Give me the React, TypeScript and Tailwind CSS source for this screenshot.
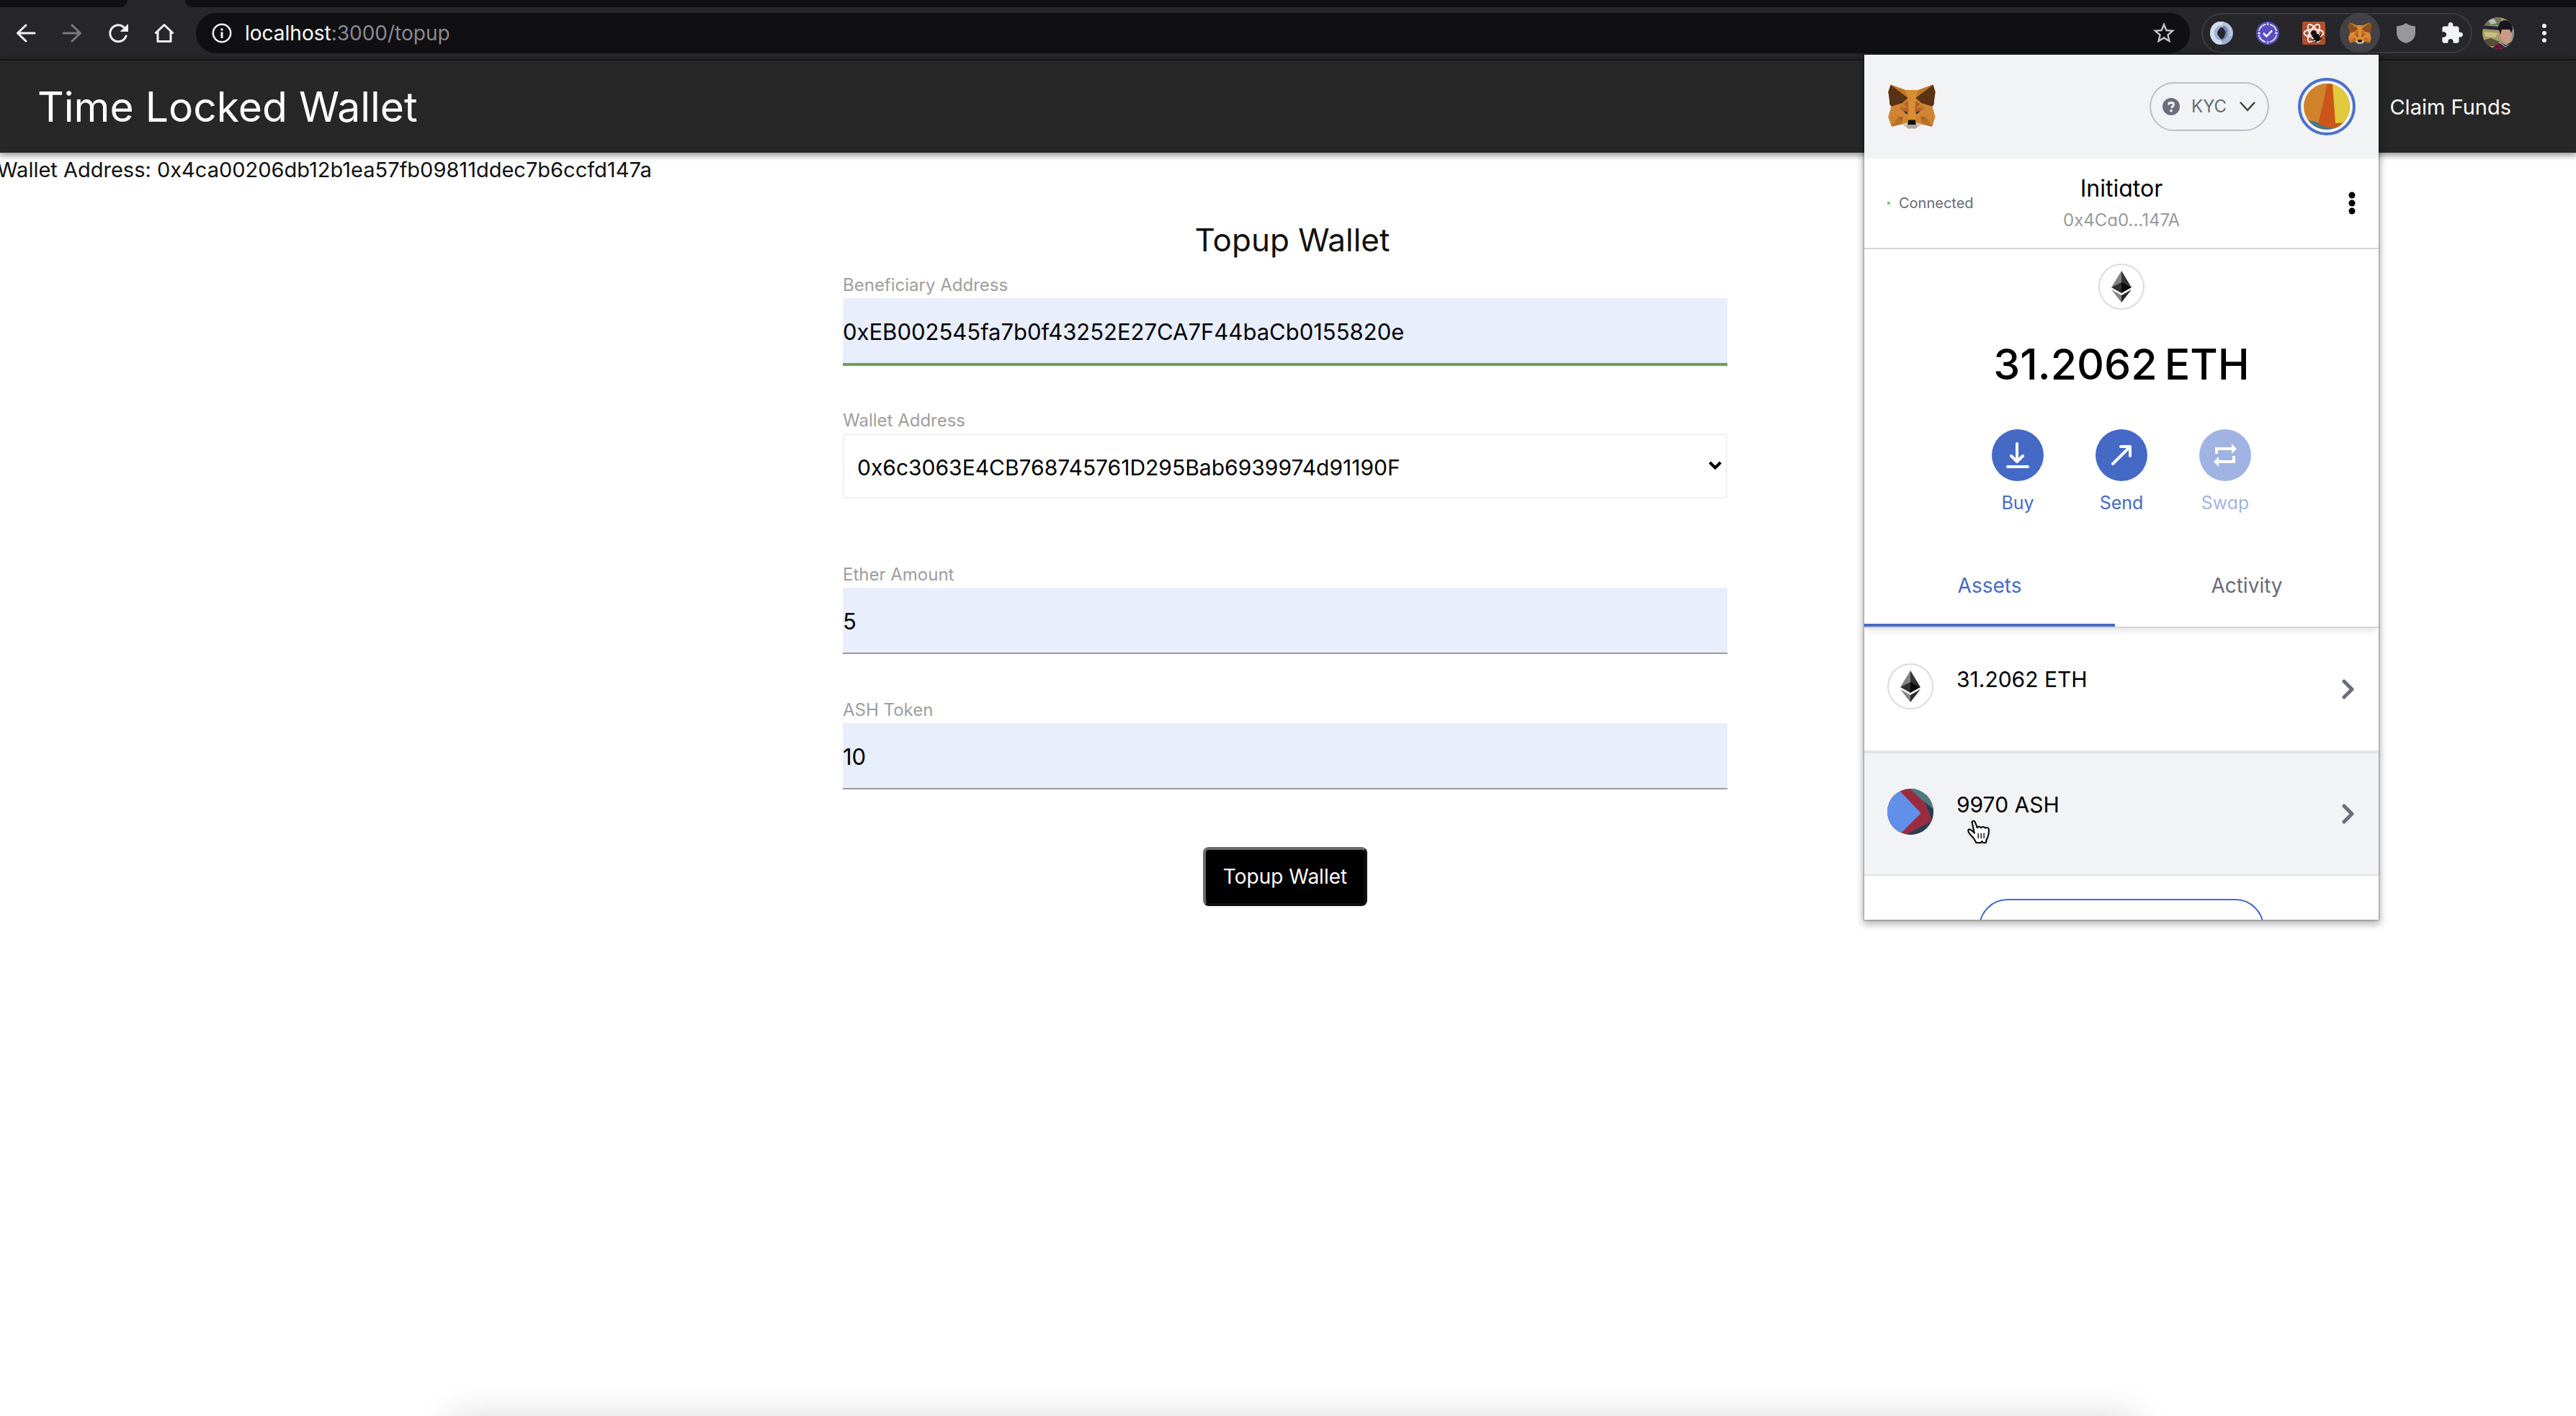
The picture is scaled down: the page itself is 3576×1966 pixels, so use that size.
import type { ReactNode } from 'react'

function IconButton({ label, className = '', children }: { label: string; className?: string; children: ReactNode }) {
  return (
    <button type="button" aria-label={label} className={`flex shrink-0 items-center justify-center ${className}`}>
      {children}
    </button>
  )
}

function Fox({ className, ear, body }: { className: string; ear: string; body: string }) {
  return (
    <svg viewBox="65 81 199 186" className={className} aria-hidden="true">
      <path
        fill={body}
        d="M76 82 138 105H191L253 82 263 112 257 150 259 158 254 163 256 168 250 173 262 214 249 258 205 247 182 265H147L124 247 80 258 66 214 79 173 73 168 75 163 70 158 72 150 66 112Z"
      />
      <path fill="#b9702a" d="M76 82 138 105 148 138ZM253 82 191 105 181 138Z" opacity=".7" />
      <path fill="#d98e33" d="M138 105H191L181 138 177 184 180 230H149L152 184 148 138Z" />
      <path fill={ear} d="M76 83 148 138 125 159 79 173 72 165 71 150 66 112ZM253 83 181 138 204 159 250 173 257 165 258 150 263 112Z" />
      <path fill="#b9702b" d="M66 216H107L124 247 80 258ZM262 216H222L205 247 249 258Z" />
      <path fill="#cd8230" d="M66 216 107 216 80 256ZM262 216 222 216 249 256Z" />
      <path fill="#a95f26" d="M107 216H127L122 240ZM222 216H202L207 240Z" />
      <path fill="#b0632a" d="M111 181 148 148 151 190 146 208 128 193ZM218 181 181 148 178 190 183 208 201 193Z" />
      <path fill="#c77a30" d="M111 181 130 163 148 181ZM218 181 199 163 181 181Z" />
      <path fill="#2b3438" d="M131 193 147 197 146 205 137 201ZM198 193 182 197 183 205 192 201Z" />
      <path fill="#d2c7bb" d="M124 246 148 240H181L205 246 182 265H147Z" />
      <path fill="#b3a697" d="M140 252H189L182 265H147Z" />
      <path fill="#111" d="M150 230H179L182 250H147Z" />
    </svg>
  )
}

function EthLogo() {
  return (
    <span className="flex size-16 shrink-0 items-center justify-center rounded-full border-2 border-[#dcdcdc] bg-white">
      <svg viewBox="0 0 28 44" className="h-11 w-7" aria-hidden="true">
        <path fill="#828384" d="M14 0 0 23 14 17Z" />
        <path fill="#343434" d="M14 0 28 23 14 17Z" />
        <path fill="#2f3030" d="M0 23 14 16V31Z" />
        <path fill="#0b0b0b" d="M28 23 14 16V31Z" />
        <path fill="#828384" d="M0 26 14 34V44Z" />
        <path fill="#2a2a2a" d="M28 26 14 34V44Z" />
      </svg>
    </span>
  )
}

function TokenLogo() {
  return (
    <svg viewBox="60 48 192 192" className="size-16 shrink-0" aria-hidden="true">
      <clipPath id="token">
        <circle cx="156" cy="144" r="96" />
      </clipPath>
      <g clipPath="url(#token)">
        <path fill="#9a2c42" d="M60 48H252V240H60Z" />
        <path fill="#4b7c80" d="M146 40 252 140V40Z" />
        <path fill="#23404f" d="M215 103 252 134V200L242 175Z" />
        <path fill="#23404f" d="M140 240 252 165V250H140Z" />
        <path fill="#9a2c42" d="M190 90 215 103 244 172 240 186 135 240 190 150Z" />
        <path fill="#6090e8" d="M103 48 200 150 106 244H40V48Z" />
      </g>
    </svg>
  )
}

function AccountAvatar() {
  return (
    <svg viewBox="0 0 64 64" className="size-16" aria-hidden="true">
      <clipPath id="account">
        <circle cx="32" cy="32" r="32" />
      </clipPath>
      <g clipPath="url(#account)">
        <path fill="#d0822a" d="M0 0H64V64H0Z" />
        <path fill="#45788a" d="M0 49 20 54 64 64V70H0Z" />
        <path fill="#cb5619" d="M33 0H41L44 55 64 52V64H46L20 57Z" />
        <path fill="#e0ca3c" d="M40 0H64V54L44 55Z" />
      </g>
    </svg>
  )
}

function ProfilePhoto() {
  return (
    <svg viewBox="0 0 44 44" className="size-11" aria-hidden="true">
      <clipPath id="profile">
        <circle cx="22" cy="22" r="22" />
      </clipPath>
      <g clipPath="url(#profile)">
        <path fill="#a59a6c" d="M0 0H44V44H0Z" />
        <path fill="#6f7a5c" d="M0 0H26V11H0Z" />
        <path fill="#b9c0ae" d="M8 4 16 2 20 8 12 10ZM34 0H44V8Z" />
        <path fill="#23262d" d="M0 11 24 13V18L0 16Z" />
        <path fill="#cbbf82" d="M2 20 22 22 18 28 4 27Z" />
        <path fill="#574d38" d="M0 32 12 29 24 34 18 40H4Z" />
        <path fill="#8f8e8a" d="M40 10H44V30H40Z" />
        <path fill="#c99a86" d="M25 16H41V26Q40 36 34 36 27 34 25 26Z" />
        <path fill="#17161c" d="M22 14Q23 4 32 4 42 5 42 16L40 22 38 17 27 17 25 24Z" />
        <path fill="#6a123c" d="M12 44 22 36 36 40 42 34 44 44Z" />
        <path fill="#2a2a40" d="M23 34 33 39 40 34 37 42H28Z" />
        <path stroke="#d5d5dd" strokeWidth="1" fill="none" d="M24 35 32 41 38 38" />
      </g>
    </svg>
  )
}

function BrowserToolbar() {
  return (
    <div className="bg-[#27262b]">
      <div className="flex h-[10px] overflow-hidden">
        <div className="w-[177px] rounded-br-xl bg-[#101012]" />
        <div className="w-20" />
        <div className="flex-1 rounded-bl-xl bg-[#101012]" />
      </div>
      <div className="flex h-[74px] items-center border-b-2 border-[#1a1a1c] pr-3 pl-1 text-[#f1f3f4]">
        <IconButton label="Back" className="h-14 w-16">
          <svg viewBox="0 0 28 28" className="size-7" fill="none" stroke="currentColor" strokeWidth="3" strokeLinecap="round" strokeLinejoin="round">
            <path d="M26 14H2.500M14 3 2.500 14 14 25" />
          </svg>
        </IconButton>
        <IconButton label="Forward" className="h-14 w-16 text-[#7c7b7f]">
          <svg viewBox="0 0 28 28" className="size-7" fill="none" stroke="currentColor" strokeWidth="3" strokeLinecap="round" strokeLinejoin="round">
            <path d="M2 14H25.500M14 3 25.500 14 14 25" />
          </svg>
        </IconButton>
        <IconButton label="Reload" className="h-14 w-16">
          <svg viewBox="0 0 28 28" className="size-7" fill="none" stroke="currentColor" strokeWidth="3" strokeLinecap="round">
            <path d="M21.500 5.500A11.400 11.400 0 1 0 25 18" />
            <path fill="currentColor" stroke="none" d="M28 1V12H16.500Z" />
          </svg>
        </IconButton>
        <IconButton label="Home" className="h-14 w-16">
          <svg viewBox="0 0 28 28" className="size-7" fill="none" stroke="currentColor" strokeWidth="3">
            <path d="M1.500 14.500 14 2.500 26.500 14.500M5 12V25.500H23V12" strokeLinejoin="round" />
          </svg>
        </IconButton>
        <div className="ml-3 flex h-14 flex-1 items-center rounded-full bg-[#101013] pr-2 pl-[22px]">
          <svg viewBox="0 0 28 28" className="mr-[18px] size-7" fill="none" stroke="currentColor" strokeWidth="2.500" aria-hidden="true">
            <circle cx="14" cy="14" r="12.200" />
            <path strokeWidth="3" d="M14 12.500V21M14 7.500V10.500" />
          </svg>
          <p className="text-[28px] leading-9 text-[#8b8a8e]">
            <span className="text-white">localhost</span>:3000/topup
          </p>
          <IconButton label="Bookmark this page" className="ml-auto size-14 text-[#c4c4c6]">
            <svg viewBox="0 0 24 24" className="size-9" fill="currentColor">
              <path d="M22 9.240l-7.190-.62L12 2 9.190 8.630 2 9.240l5.460 4.730L5.820 21 12 17.270 18.180 21l-1.630-7.030L22 9.240zM12 15.400l-3.760 2.270 1-4.280-3.320-2.880 4.380-.38L12 6.100l1.710 4.040 4.380.38-3.320 2.880 1 4.280L12 15.400z" />
            </svg>
          </IconButton>
        </div>
        <div className="ml-4 flex items-center gap-2 rounded-full ring-2 ring-[#3b3b40] ring-inset">
          <IconButton label="JSON viewer" className="size-14">
            <svg viewBox="0 0 32 32" className="size-8" fill="none">
              <circle cx="16" cy="16" r="11" stroke="#9fb0d2" strokeWidth="10" />
              <path stroke="#d3dcee" strokeWidth="6" d="M16 28C9 31 2 23 3 14 4 6 11 1 18 3" />
              <path stroke="#6f83ab" strokeWidth="3" d="M18 7C25 9 25 22 15 25" />
              <path stroke="#b9c6e0" strokeWidth="4" d="M17 3C27 3 31 13 28 20" />
              <ellipse cx="16" cy="16" rx="4.500" ry="8" fill="#27262b" />
            </svg>
          </IconButton>
          <IconButton label="Task verifier" className="size-14">
            <svg viewBox="0 0 32 32" className="size-8" fill="none" stroke="#fff">
              <circle cx="16" cy="16" r="16" fill="#5a4fc0" stroke="none" />
              <circle cx="16" cy="16" r="12.500" strokeWidth="1.500" strokeDasharray="13.600 6" strokeDashoffset="-3" />
              <path strokeWidth="2.500" d="M10 16 14.500 20.500 22 12.500" />
              <path strokeWidth="1.500" d="M16 1.500V5M16 27V30.500" />
              <circle cx="4" cy="16" r="1.600" fill="#fff" stroke="none" />
              <circle cx="28" cy="16" r="1.600" fill="#fff" stroke="none" />
            </svg>
          </IconButton>
          <IconButton label="React developer tools" className="size-14">
            <svg viewBox="0 0 32 32" className="size-8" fill="none" stroke="#fff" strokeWidth="1.700">
              <rect width="32" height="32" rx="2" fill="#b1502f" stroke="none" />
              <ellipse cx="16" cy="16" rx="13.500" ry="5.500" />
              <ellipse cx="16" cy="16" rx="13.500" ry="5.500" transform="rotate(60 16 16)" />
              <ellipse cx="16" cy="16" rx="13.500" ry="5.500" transform="rotate(120 16 16)" />
              <circle cx="16" cy="16" r="3.500" fill="#111" stroke="none" />
              <ellipse cx="20" cy="22" rx="4.500" ry="6" fill="#111" stroke="none" transform="rotate(-35 20 22)" />
              <path stroke="#111" d="M13 20 18 22M13 26 19 24M18 29 21 25M22 17 22 20M26 18 22 22M27 24 22 24" />
            </svg>
          </IconButton>
          <IconButton label="MetaMask" className="size-14 rounded-full bg-[#434347]">
            <Fox className="h-[30px] w-8" ear="#8a4f22" body="#e08a2c" />
          </IconButton>
          <IconButton label="Shield" className="size-14">
            <svg viewBox="0 0 26 28" className="h-7 w-[26px]">
              <path fill="#98989a" d="M13 0C17 3 21 4 26 4.500V13C26 21 21 26 13 28 5 26 0 21 0 13V4.500C5 4 9 3 13 0Z" />
            </svg>
          </IconButton>
          <IconButton label="Extensions" className="size-14">
            <svg viewBox="1 1 22 22" className="size-[30px]" fill="currentColor">
              <path d="M20.500 11H19V7c0-1.100-.9-2-2-2h-4V3.500C13 2.120 11.880 1 10.500 1S8 2.120 8 3.500V5H4c-1.100 0-1.990.9-1.990 2v3.800H3.500c1.490 0 2.700 1.210 2.700 2.700s-1.210 2.700-2.700 2.700H2V20c0 1.100.9 2 2 2h3.800v-1.500c0-1.490 1.210-2.700 2.700-2.700 1.490 0 2.700 1.210 2.700 2.700V22H17c1.100 0 2-.9 2-2v-4h1.500c1.380 0 2.500-1.120 2.500-2.500S21.880 11 20.500 11z" />
            </svg>
          </IconButton>
        </div>
        <IconButton label="Profile" className="ml-3.5 size-11">
          <ProfilePhoto />
        </IconButton>
        <IconButton label="Browser menu" className="ml-2.5 h-14 w-16">
          <svg viewBox="0 0 8 28" className="h-7 w-2" fill="currentColor">
            <circle cx="4" cy="4" r="3" />
            <circle cx="4" cy="14" r="3" />
            <circle cx="4" cy="24" r="3" />
          </svg>
        </IconButton>
      </div>
    </div>
  )
}

function TextField({ id, label, value, valid }: { id: string; label: string; value: string; valid?: boolean }) {
  return (
    <div className="mb-[60px]">
      <label htmlFor={id} className="block text-[24px] leading-9 text-[#9e9e9e]">
        {label}
      </label>
      <input
        id={id}
        type="text"
        defaultValue={value}
        className={`block h-[92px] w-full border-b-2 bg-[#e8eefc] pt-0.5 text-[31px] text-black outline-none ${
          valid ? 'border-[#6ca04e] shadow-[0_2px_0_0_#6ca04e]' : 'border-[#9a9a9a]'
        }`}
      />
    </div>
  )
}

function TopupForm() {
  return (
    <main className="pt-7 pr-2">
      <form className="mx-auto max-w-[1228px]" onSubmit={(e) => e.preventDefault()}>
        <h2 className="pl-5 text-center text-[44px] leading-[90px] text-[#111]">Topup Wallet</h2>
        <TextField id="beneficiary" label="Beneficiary Address" value="0xEB002545fa7b0f43252E27CA7F44baCb0155820e" valid />
        <div className="mb-[88px]">
          <label htmlFor="wallet" className="block text-[24px] leading-9 text-[#9e9e9e]">
            Wallet Address
          </label>
          <div className="relative">
            <select
              id="wallet"
              className="block h-[90px] w-full appearance-none rounded-sm border-2 border-[#f0f0f0] bg-white/90 px-[18px] pt-1 text-[30px] text-black"
            >
              <option>0x6c3063E4CB768745761D295Bab6939974d91190F</option>
            </select>
            <svg
              viewBox="0 0 18 13"
              className="pointer-events-none absolute top-[38px] right-2 h-[13px] w-[18px]"
              fill="none"
              stroke="#000"
              strokeWidth="4"
              aria-hidden="true"
            >
              <path d="M1.500 2 9 9.500 16.500 2" />
            </svg>
          </div>
        </div>
        <TextField id="ether" label="Ether Amount" value="5" />
        <TextField id="ash" label="ASH Token" value="10" />
        <div className="flex justify-center pt-5">
          <button
            type="submit"
            className="h-[82px] rounded-lg border-4 border-t-[#6b6b6b] border-r-[#111] border-b-[#111] border-l-[#6b6b6b] bg-black px-6 text-[28px] text-white"
          >
            Topup Wallet
          </button>
        </div>
      </form>
    </main>
  )
}

function WalletAction({ label, disabled, children }: { label: string; disabled?: boolean; children: ReactNode }) {
  return (
    <button type="button" disabled={disabled} className={`flex w-36 flex-col items-center gap-4 text-[#456ac6] ${disabled ? 'opacity-50' : ''}`}>
      <span className="flex size-[72px] items-center justify-center rounded-full bg-[#456ac6]">{children}</span>
      <span className="text-[25px] leading-7">{label}</span>
    </button>
  )
}

function AssetRow({ logo, label, className, children }: { logo: ReactNode; label: string; className: string; children?: ReactNode }) {
  return (
    <li className={`relative h-[172px] ${className}`}>
      <button type="button" className="flex size-full gap-8 pr-[34px] pl-8 text-left">
        <span className="mt-[49px]">{logo}</span>
        <span className="mt-[51px] text-[30px] leading-10">{label}</span>
        <svg viewBox="0 0 17 28" className="ml-auto h-7 w-[17px] self-center" fill="none" stroke="#6a6f7b" strokeWidth="5" strokeLinecap="round" strokeLinejoin="round" aria-hidden="true">
          <path d="M3 3 14 14 3 25" />
        </svg>
      </button>
      {children}
    </li>
  )
}

function WalletPopup() {
  return (
    <section
      aria-label="MetaMask"
      className="absolute top-[76px] right-[274px] h-[1201px] w-[714px] overflow-hidden bg-white text-black shadow-[0_0_2px_1px_rgba(0,0,0,0.3),0_4px_10px_2px_rgba(0,0,0,0.3)] [font-feature-settings:'cv11']"
    >
      <div className="flex h-36 items-center bg-[#f2f3f5] pr-8 pl-[33px]">
        <Fox className="h-[62px] w-[66px]" ear="#5a3214" body="#cf8531" />
        <button type="button" className="ml-auto flex h-[68px] w-[166px] items-center rounded-full border-2 border-[#bbbec5] pl-4 text-[#666b77]">
          <svg viewBox="0 0 24 24" className="size-6" aria-hidden="true">
            <circle cx="12" cy="12" r="12" fill="#6a6f7b" />
            <path d="M8.500 9.500Q8.500 6.500 12 6.500 15.500 6.500 15.500 9.300 15.500 11 12 13.500" fill="none" stroke="#fff" strokeWidth="2.800" />
            <circle cx="12" cy="17.800" r="1.800" fill="#fff" />
          </svg>
          <span className="ml-4 text-[24px]">KYC</span>
          <svg viewBox="0 0 22 14" className="ml-[18px] h-3.5 w-[22px]" fill="none" stroke="#3b3f45" strokeWidth="2.500" aria-hidden="true">
            <path d="M1 1 11 12 21 1" />
          </svg>
        </button>
        <button type="button" aria-label="Accounts" className="ml-10 flex size-20 items-center justify-center rounded-full border-4 border-[#4a70cc]">
          <AccountAvatar />
        </button>
      </div>
      <div className="grid h-[126px] grid-cols-[1fr_auto_1fr] items-center border-b-2 border-[#d2d5da] pr-8 pl-8">
        <p className="flex items-center gap-3 text-[20px] text-[#666b77]">
          <span className="size-1 bg-[#86d06b]" />
          Connected
        </p>
        <button type="button" className="flex flex-col items-center gap-1 pt-1">
          <span className="text-[32px] leading-10">Initiator</span>
          <span className="text-[24px] leading-10 text-[#989a9b]">0x4Ca0...147A</span>
        </button>
        <IconButton label="Account options" className="justify-self-end">
          <svg viewBox="0 0 10 34" className="h-[34px] w-2.5">
            <circle cx="5" cy="6" r="4.500" />
            <circle cx="5" cy="17" r="4.500" />
            <circle cx="5" cy="28" r="4.500" />
          </svg>
        </IconButton>
      </div>
      <div className="flex flex-col items-center pt-5 pb-11">
        <EthLogo />
        <p className="flex gap-2.5 pt-11 text-[59px] leading-[64px] font-medium">
          <span>31.2062</span>
          <span>ETH</span>
        </p>
        <div className="flex pt-[58px]">
          <WalletAction label="Buy">
            <svg viewBox="0 0 32 36" className="h-9 w-8" fill="none" stroke="#fff" strokeWidth="4" strokeLinecap="round" strokeLinejoin="round" aria-hidden="true">
              <path d="M15 2V27M7 19 15 27 23 19M2 34H30" />
            </svg>
          </WalletAction>
          <WalletAction label="Send">
            <svg viewBox="0 0 28 28" className="size-7" fill="none" stroke="#fff" strokeWidth="4" strokeLinecap="round" strokeLinejoin="round" aria-hidden="true">
              <path d="M2 26 26 2M13 2H26V15" />
            </svg>
          </WalletAction>
          <WalletAction label="Swap" disabled>
            <svg viewBox="0 0 32 32" className="size-8" fill="none" stroke="#fff" strokeWidth="4" aria-hidden="true">
              <path d="M4 14V7H25M28 17V25H7" />
              <path fill="#fff" stroke="none" d="M25 0 32 7 25 14ZM7 18 0 25 7 32Z" />
            </svg>
          </WalletAction>
        </div>
      </div>
      <div role="tablist" className="flex h-[116px] border-b-2 border-[#d2d3d5] text-[28px] shadow-[0_8px_8px_-4px_rgba(0,0,0,0.1)]">
        <button type="button" role="tab" aria-selected="true" className="w-[348px] border-b-4 border-[#456ac6] pt-1 text-[#456ac6]">
          Assets
        </button>
        <button type="button" role="tab" aria-selected="false" className="flex-1 border-b-4 border-transparent pt-1 text-[#666b77]">
          Activity
        </button>
      </div>
      <ul>
        <AssetRow logo={<EthLogo />} label="31.2062 ETH" className="border-b-2 border-[#e2e3e4]" />
        <AssetRow logo={<TokenLogo />} label="9970 ASH" className="border-y-2 border-[#e2e3e4] bg-[#f2f3f5]">
          <svg viewBox="390 172 98 102" className="pointer-events-none absolute top-[92px] left-[142px] h-[34px] w-[33px] drop-shadow" aria-hidden="true">
            <path
              fill="#fff"
              stroke="#000"
              strokeWidth="6"
              strokeLinejoin="round"
              d="M412 182Q418 173 425 182L434 206Q441 197 450 206 458 197 467 207 478 201 482 212 484 228 477 246 470 256 470 268H458L454 262 448 268H430Q422 250 404 233 393 220 398 213 405 209 422 228Z"
            />
            <path stroke="#000" strokeWidth="4" d="M438 228V250M450 228V250M462 228V250" />
          </svg>
        </AssetRow>
      </ul>
      <button type="button" aria-label="Add token" className="mx-auto mt-8 block h-20 w-[396px] rounded-full border-2 border-[#456ac6]" />
    </section>
  )
}

export default function App() {
  return (
    <div className="relative min-h-screen bg-white font-['Inter',sans-serif] text-[#111]">
      <BrowserToolbar />
      <header className="flex h-32 items-center justify-between bg-[#272727] pt-0.5 pr-[90px] pl-[52px] text-white shadow-[0_2px_8px_2px_rgba(0,0,0,0.4)]">
        <h1 className="text-[57px]">Time Locked Wallet</h1>
        <a href="#claim" className="text-[29px]">
          Claim Funds
        </a>
      </header>
      <p className="-ml-1 text-[29px] leading-12">Wallet Address: 0x4ca00206db12b1ea57fb09811ddec7b6ccfd147a</p>
      <TopupForm />
      <WalletPopup />
      <div className="pointer-events-none absolute inset-x-0 bottom-0 h-16 overflow-hidden">
        <div className="absolute top-full right-[610px] left-[625px] h-20 shadow-[0_0_50px_rgba(0,0,0,0.15)]" />
      </div>
    </div>
  )
}
